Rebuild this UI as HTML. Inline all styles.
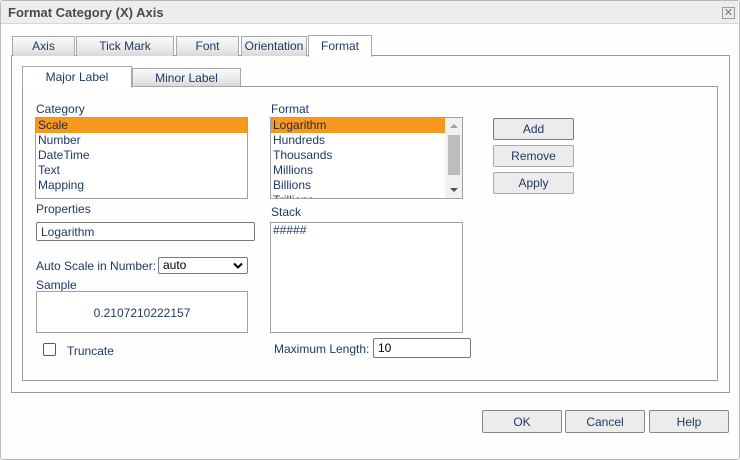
<!DOCTYPE html>
<html><head><style>
*{box-sizing:border-box;margin:0;padding:0}
body{width:740px;height:460px;overflow:hidden;background:#fff;font-family:"Liberation Sans",sans-serif;font-size:12px;color:#1f3a64;position:relative}
.a{position:absolute}
#dlg{left:0;top:0;width:740px;height:460px;border:1px solid #b8b8b8;border-radius:3px;background:#fdfefd}
#tb{left:1px;top:1px;width:737px;height:23px;background:#ededed;border-bottom:1px solid #d6d6d6}
#tt{left:8px;top:5px;font-weight:bold;font-size:13px;color:#4a4a4a}
.tab{height:20px;border:1px solid #a9a9a9;border-bottom:none;background:linear-gradient(#fafafa,#e6e6e6 70%,#d8d8d8);text-align:center;line-height:19px;color:#1f3a64}
.act{background:#fff;height:22px}
.box{border:1px solid #a0a0a0;background:#fff}
.row{height:15px;line-height:15px;padding-left:2px}
.sel{background:#f7991f;color:#1f2a40}
.btn{border:1px solid #a8a8a8;border-radius:2px;background:#ececec;text-align:center;color:#1f3a64}
</style></head><body>
<div id="dlg" class="a"></div>
<div id="tb" class="a"></div>
<div id="tt" class="a">Format Category (X) Axis</div>
<div class="a" style="left:722px;top:7px;width:13px;height:12px;border:1px solid #9a9a9a;font-size:11px;line-height:10px;text-align:center;color:#777">✕</div>

<div class="a" style="left:11px;top:55px;width:719px;height:338px;border:1px solid #9a9a9a"></div>
<div class="a tab" style="left:12px;top:36px;width:63px">Axis</div>
<div class="a tab" style="left:76px;top:36px;width:98px">Tick Mark</div>
<div class="a tab" style="left:176px;top:36px;width:63px">Font</div>
<div class="a tab" style="left:241px;top:36px;width:66px">Orientation</div>
<div class="a tab act" style="left:308px;top:35px;width:64px;line-height:21px">Format</div>

<div class="a" style="left:22px;top:86px;width:696px;height:295px;border:1px solid #9a9a9a"></div>
<div class="a tab act" style="left:22px;top:66px;width:110px;line-height:21px">Major Label</div>
<div class="a tab" style="left:132px;top:68px;width:109px;height:19px;border-bottom:1px solid #a9a9a9">Minor Label</div>

<div class="a" style="left:36px;top:102px">Category</div>
<div class="a box" style="left:35px;top:117px;width:213px;height:82px">
<div class="row sel">Scale</div><div class="row">Number</div><div class="row">DateTime</div><div class="row">Text</div><div class="row">Mapping</div></div>

<div class="a" style="left:271px;top:102px">Format</div>
<div class="a box" style="left:270px;top:117px;width:193px;height:82px;overflow:hidden">
<div class="row sel" style="width:174px">Logarithm</div><div class="row">Hundreds</div><div class="row">Thousands</div><div class="row">Millions</div><div class="row">Billions</div><div class="row">Trillions</div>
<div class="a" style="left:174px;top:0;width:17px;height:80px;background:#f1f0f3"></div>
<div class="a" style="left:177px;top:17px;width:12px;height:40px;background:#bdbcbf"></div>
<div class="a" style="left:179px;top:6px;border:4px solid transparent;border-bottom:4px solid #a0a0a0;border-top:none"></div>
<div class="a" style="left:179px;top:70px;border:4px solid transparent;border-top:4px solid #505050;border-bottom:none"></div>
</div>

<div class="a btn" style="left:493px;top:118px;width:81px;height:22px;line-height:21px;border-color:#7a7a7a">Add</div>
<div class="a btn" style="left:493px;top:145px;width:81px;height:22px;line-height:21px">Remove</div>
<div class="a btn" style="left:493px;top:172px;width:81px;height:22px;line-height:21px">Apply</div>

<div class="a" style="left:36px;top:202px">Properties</div>
<div class="a box" style="left:36px;top:222px;width:219px;height:19px;border-color:#777;border-radius:2px;padding-left:4px;line-height:18px">Logarithm</div>

<div class="a" style="left:36px;top:259px">Auto Scale in Number:</div>
<div class="a box" style="left:158px;top:257px;width:90px;height:17px;border-color:#777;border-radius:2px;padding-left:4px;line-height:15px;color:#000">auto
<svg class="a" style="right:4px;top:4px" width="10" height="7" viewBox="0 0 10 7"><path d="M1 1.5L5 5.5L9 1.5" stroke="#000" stroke-width="2" fill="none"/></svg></div>

<div class="a" style="left:36px;top:278px">Sample</div>
<div class="a box" style="left:36px;top:291px;width:212px;height:42px;text-align:center;line-height:42px">0.2107210222157</div>

<div class="a" style="left:43px;top:343px;width:13px;height:13px;border:1px solid #555;border-radius:2px;background:#fff"></div>
<div class="a" style="left:67px;top:344px">Truncate</div>

<div class="a" style="left:271px;top:205px">Stack</div>
<div class="a box" style="left:270px;top:222px;width:193px;height:111px;padding-left:2px;line-height:15px">#####</div>

<div class="a" style="left:274px;top:342px">Maximum Length:</div>
<div class="a box" style="left:373px;top:338px;width:98px;height:20px;border-color:#777;border-radius:2px;padding-left:4px;line-height:19px;color:#000">10</div>

<div class="a btn" style="left:482px;top:410px;width:80px;height:23px;line-height:22px;border-color:#888">OK</div>
<div class="a btn" style="left:565px;top:410px;width:80px;height:23px;line-height:22px;border-color:#888">Cancel</div>
<div class="a btn" style="left:649px;top:410px;width:80px;height:23px;line-height:22px;border-color:#888">Help</div>
</body></html>
